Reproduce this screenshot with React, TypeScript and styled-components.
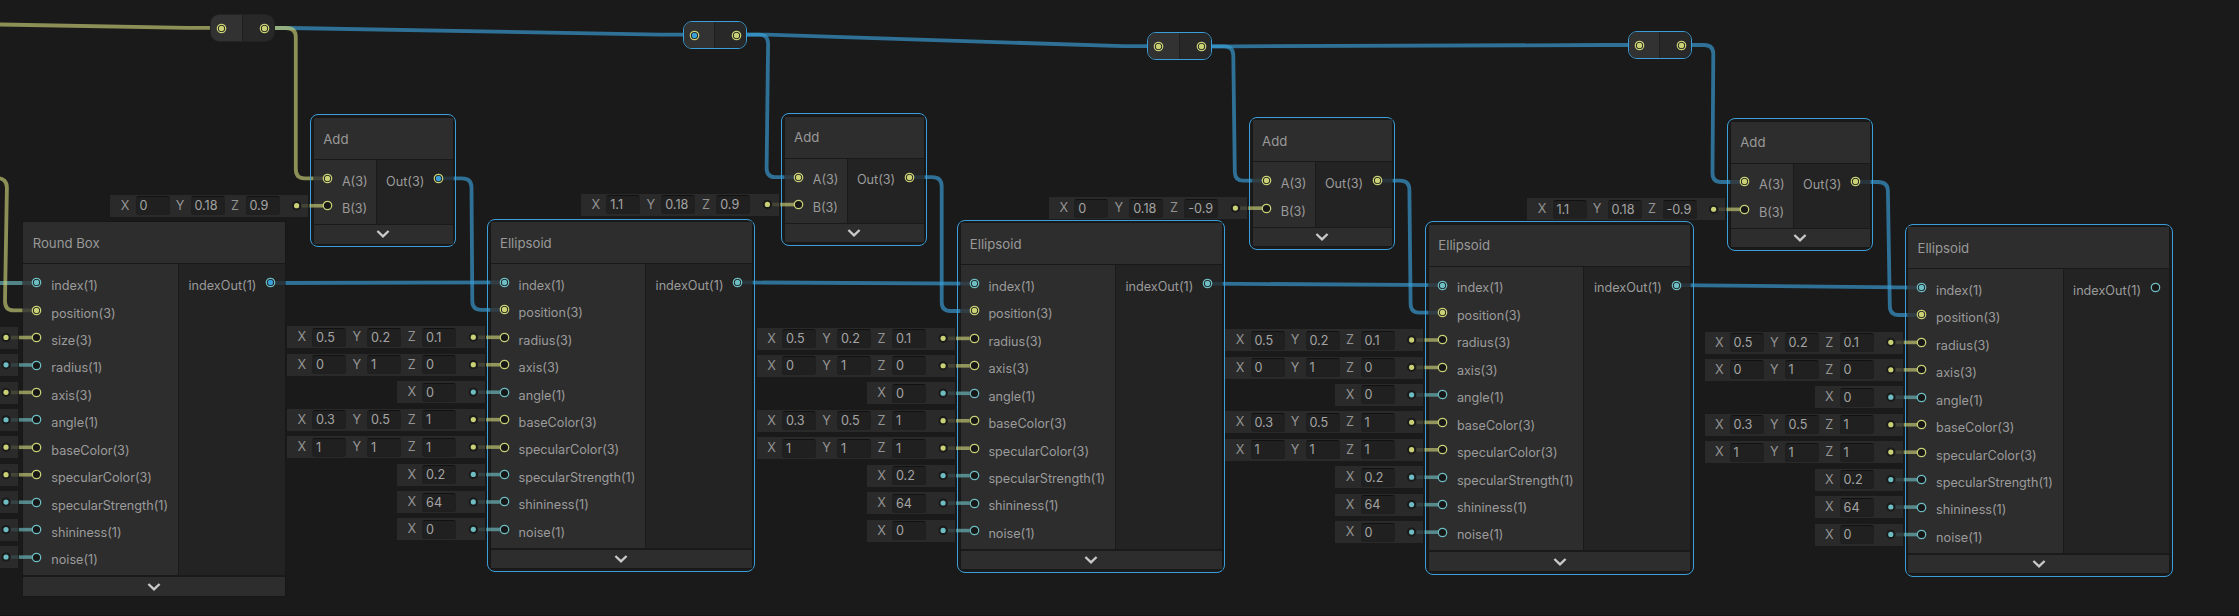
import React from "react";
import styled, { createGlobalStyle } from "styled-components";

const YELLOW = "#c9d076";
const TEAL = "#6dbdc2";
const BLUE = "#3a9fd8";

const ROW = 27.45;

const GlobalStyle = createGlobalStyle`
  body {
    margin: 0;
    background: #1a1a1a;
    overflow: hidden;
  }
`;

const Canvas = styled.main`
  position: relative;
  width: 2239px;
  height: 616px;
  box-sizing: border-box;
  overflow: hidden;
  background: #1a1a1a;
  border-bottom: 1px solid #141414;
  font-family: Inter, sans-serif;
  font-size: 12.65px;
  color: #9b9b9b;
`;

const Wires = styled.svg`
  position: absolute;
  inset: 0;
  pointer-events: none;
`;

const NodeFrame = styled.section<{ $x: number; $y: number; $w: number; $selected: boolean }>`
  position: absolute;
  left: ${(p) => p.$x}px;
  top: ${(p) => p.$y}px;
  width: ${(p) => p.$w}px;
  box-sizing: border-box;
  padding: 2.7px;
  border: 1px solid ${(p) => (p.$selected ? BLUE : "transparent")};
  border-radius: 8px;
`;

const NodeBody = styled.div`
  display: flex;
  flex-direction: column;
  box-shadow: 0 0 0 1px rgba(20, 20, 20, 0.45);
`;

const Header = styled.header`
  height: 41px;
  display: flex;
  align-items: center;
  padding-left: 9.2px;
  background: #2d2d2d;
  border-bottom: 1px solid #191919;
  font-size: 13.2px;
  line-height: 16px;
  color: #999;
`;

const Columns = styled.div`
  display: flex;
  gap: 1px;
`;

const InputColumn = styled.div<{ $w: number }>`
  width: ${(p) => p.$w}px;
  padding: 4.5px 0 4.7px;
  background: rgba(50, 50, 50, 0.8);
`;

const OutputColumn = styled.div`
  flex: 1;
  padding: 4.5px 0 4.7px;
  background: rgba(37, 37, 37, 0.8);
`;

const PortRow = styled.div<{ $out?: boolean }>`
  height: ${ROW}px;
  display: flex;
  align-items: center;
  justify-content: ${(p) => (p.$out ? "flex-end" : "flex-start")};
  gap: 8.8px;
  padding: ${(p) => (p.$out ? "0 8.5px 0 0" : "0 0 0 8px")};
`;

const Label = styled.span`
  padding-top: 6.8px;
  line-height: 16px;
  white-space: nowrap;
`;

const Footer = styled.footer<{ $compact: boolean }>`
  height: ${(p) => (p.$compact ? 18.5 : 18.8)}px;
  margin-top: ${(p) => (p.$compact ? 1 : 1.8)}px;
  display: flex;
  align-items: center;
  justify-content: center;
  background: #2d2d2d;
`;

const PortIcon = styled.svg`
  flex: none;
  width: 11px;
  height: 11px;
`;

const InputStack = styled.div<{ $x: number; $y: number }>`
  position: absolute;
  left: ${(p) => p.$x - 200}px;
  top: ${(p) => p.$y}px;
  width: 198px;
  display: flex;
  flex-direction: column;
  align-items: flex-end;
`;

const InputRow = styled.div`
  height: ${ROW}px;
  display: flex;
  align-items: flex-start;
`;

const InputBox = styled.div`
  height: 22px;
  box-sizing: border-box;
  display: flex;
  align-items: center;
  padding-left: 4.2px;
  background: #2a2a2a;
`;

const Axis = styled.span`
  width: 21px;
  text-align: center;
  line-height: 16px;
  color: #949494;
`;

const Field = styled.span`
  width: 34px;
  height: 19px;
  box-sizing: border-box;
  padding-left: 2.8px;
  border: 1px solid #1f1f1f;
  border-top-color: #111;
  border-radius: 3px;
  background: #202020;
  line-height: 18px;
  color: #a4a4a4;
`;

const Spacer = styled.span`
  width: 28.8px;
`;

const Redirect = styled.div<{ $x: number; $y: number; $selected: boolean }>`
  position: absolute;
  left: ${(p) => p.$x}px;
  top: ${(p) => p.$y}px;
  width: ${(p) => (p.$selected ? 64.4 : 65)}px;
  height: 28px;
  box-sizing: border-box;
  display: flex;
  gap: 1px;
  overflow: hidden;
  border: 1px solid ${(p) => (p.$selected ? BLUE : "#222")};
  border-radius: 9px;
  background: #1f1f1f;
`;

const RedirectHalf = styled.div<{ $out?: boolean }>`
  flex: 1;
  display: flex;
  align-items: center;
  justify-content: ${(p) => (p.$out ? "flex-end" : "flex-start")};
  padding: 0 4px 0 5px;
  background: ${(p) => (p.$out ? "#282828" : "#323232")};
`;

function Port({ color, fill }: { color: string; fill?: string }) {
  return (
    <PortIcon viewBox="0 0 11 11">
      <circle cx="5.5" cy="5.5" r="4.2" fill="#171717" stroke={color} strokeWidth="1.25" />
      {fill && <circle cx="5.5" cy="5.5" r="2.7" fill={fill} />}
    </PortIcon>
  );
}

function Chevron() {
  return (
    <svg width="14" height="10" viewBox="0 0 14 10">
      <path d="M1.4 2 L7 7.4 L12.6 2" fill="none" stroke="#cacaca" strokeWidth="2.3" />
    </svg>
  );
}

type PortDef = { label: string; fill?: string; value?: string[] };

const tone = (label: string) => (label.endsWith("(3)") ? YELLOW : TEAL);

type NodeProps = {
  title: string;
  x: number;
  y: number;
  w: number;
  inputWidth: number;
  inputs: PortDef[];
  output: PortDef;
  selected?: boolean;
  compact?: boolean;
};

function GraphNode({
  title,
  x,
  y,
  w,
  inputWidth,
  inputs,
  output,
  selected = true,
  compact = false,
}: NodeProps) {
  const firstFree = inputs.findIndex((p) => p.value);
  return (
    <>
      <InputStack $x={x} $y={y + 53.0 + firstFree * ROW}>
        {inputs.slice(firstFree).map((p) => (
          <InputRow key={p.label}>
            <InputBox>
              {p.value!.map((v, i) => (
                <React.Fragment key={i}>
                  <Axis>{"XYZ"[i]}</Axis>
                  <Field>{v}</Field>
                </React.Fragment>
              ))}
              <Spacer />
            </InputBox>
          </InputRow>
        ))}
      </InputStack>
      <NodeFrame $x={x} $y={y} $w={w} $selected={selected}>
        <NodeBody>
          <Header>{title}</Header>
          <Columns>
            <InputColumn $w={inputWidth}>
              {inputs.map((p) => (
                <PortRow key={p.label}>
                  <Port color={tone(p.label)} fill={p.fill} />
                  <Label>{p.label}</Label>
                </PortRow>
              ))}
            </InputColumn>
            <OutputColumn>
              <PortRow $out>
                <Label>{output.label}</Label>
                <Port color={tone(output.label)} fill={output.fill} />
              </PortRow>
            </OutputColumn>
          </Columns>
          <Footer $compact={compact}>
            <Chevron />
          </Footer>
        </NodeBody>
      </NodeFrame>
    </>
  );
}

const linked = (label: string): PortDef => ({ label, fill: tone(label) });
const free = (label: string, ...value: string[]): PortDef => ({ label, value });

const ellipsoidInputs = [
  linked("index(1)"),
  linked("position(3)"),
  free("radius(3)", "0.5", "0.2", "0.1"),
  free("axis(3)", "0", "1", "0"),
  free("angle(1)", "0"),
  free("baseColor(3)", "0.3", "0.5", "1"),
  free("specularColor(3)", "1", "1", "1"),
  free("specularStrength(1)", "0.2"),
  free("shininess(1)", "64"),
  free("noise(1)", "0"),
];

/* The value fields of this node lie beyond the left edge of the viewport. */
const roundBoxInputs = [
  linked("index(1)"),
  linked("position(3)"),
  free("size(3)"),
  free("radius(1)"),
  free("axis(3)"),
  free("angle(1)"),
  free("baseColor(3)"),
  free("specularColor(3)"),
  free("specularStrength(1)"),
  free("shininess(1)"),
  free("noise(1)"),
];

const addNodes = [
  { x: 310.4, y: 114.4, b: ["0", "0.18", "0.9"], out: BLUE },
  { x: 781.2, y: 113.2, b: ["1.1", "0.18", "0.9"], out: YELLOW },
  { x: 1249.2, y: 116.8, b: ["0", "0.18", "-0.9"], out: YELLOW },
  { x: 1727.4, y: 118, b: ["1.1", "0.18", "-0.9"], out: YELLOW },
];

const ellipsoids = [
  { x: 487.1, y: 218.5, out: TEAL },
  { x: 956.9, y: 219.6, out: TEAL },
  { x: 1425.4, y: 221.2, out: TEAL },
  { x: 1904.6, y: 223.6, out: undefined },
];

const redirects = [
  { x: 210, y: 14, selected: false, fill: YELLOW },
  { x: 682.6, y: 21, selected: true, fill: BLUE },
  { x: 1147.4, y: 32.3, selected: true, fill: YELLOW },
  { x: 1627.6, y: 31.2, selected: true, fill: YELLOW },
];

/* Long links between nodes, drawn beneath the node bodies. */
const links: [string, string][] = [
  [YELLOW, "M0 24.5 L188 27.8 H210"],
  [BLUE, "M275 28 H291 L660 34.6 H683"],
  [YELLOW, "M275 28 H286 Q295.8 28 295.8 37 V169 Q295.8 178.3 304.5 178.3 H327"],
  [BLUE, "M439 178.3 H462 Q471.5 178.3 471.5 187.5 L472.3 301 Q472.4 309.8 481 309.8 H504"],
  [BLUE, "M747 34.7 H767 L1123 46.2 H1148"],
  [BLUE, "M747 34.7 H759 Q768.2 34.7 768.1 44 L766.6 168 Q766.6 177.2 775 177.2 H798"],
  [BLUE, "M910 177.2 H932 Q941.7 177.2 941.7 186.5 V302 Q941.7 311 950.5 311 H974"],
  [BLUE, "M1212 46.3 H1232 L1604 45 H1628"],
  [BLUE, "M1212 46.3 H1224 Q1233.2 46.3 1233.3 55.5 L1234.8 172 Q1234.9 180.7 1243.5 180.7 H1266"],
  [BLUE, "M1378 180.7 H1400 Q1409.3 180.7 1409.4 190 L1410.6 303.5 Q1410.7 312.6 1419 312.6 H1442"],
  [BLUE, "M1692 45 H1704 Q1713.3 45 1713.3 54 L1712.5 173 Q1712.5 182 1721 182 H1744"],
  [BLUE, "M1856 182 H1878 Q1887.8 182 1887.9 191 L1889.8 306 Q1890 315 1898.5 315 H1922"],
  [BLUE, "M271 283 L504 282.4"],
  [BLUE, "M738 282.4 L974 283.6"],
  [BLUE, "M1208 283.6 L1442 285.2"],
  [BLUE, "M1677 285.2 L1922 287.6"],
  [TEAL, "M0 283 H37"],
  [YELLOW, "M-4 178 Q7 178 6.9 188 L5 301 Q5 310.4 13.5 310.4 H37"],
];

/* Short stub from an inline input's dot to its port. */
function Stub({ x, y, color }: { x: number; y: number; color: string }) {
  return (
    <g>
      <circle cx={x - 13.8} cy={y - 0.6} r="4.6" fill="#1a1a1a" />
      <circle cx={x - 13.8} cy={y - 0.6} r="2.6" fill={color} />
      <path d={`M${x - 9} ${y - 0.5} H${x - 2}`} stroke={color} strokeOpacity="0.17" strokeWidth="3.6" />
      <path d={`M${x - 1} ${y - 0.5} H${x + 12.8}`} stroke={color} strokeOpacity="0.65" strokeWidth="3.6" />
    </g>
  );
}

function stubs(x: number, y: number, inputs: PortDef[]) {
  return inputs.map((p, i) =>
    p.value ? <Stub key={`${x}-${i}`} x={x} y={y + 64.4 + i * ROW} color={tone(p.label)} /> : null,
  );
}

const addInputs = (b: string[]) => [linked("A(3)"), free("B(3)", ...b)];

export default function App() {
  return (
    <>
      <GlobalStyle />
      <Canvas>
        <Wires width="2239" height="616">
          {links.map(([color, d]) => (
            <path key={d} d={d} fill="none" stroke={color} strokeOpacity="0.65" strokeWidth="3.8" />
          ))}
        </Wires>
        {redirects.map((r) => (
          <Redirect key={r.x} $x={r.x} $y={r.y} $selected={r.selected}>
            <RedirectHalf>
              <Port color={YELLOW} fill={r.fill} />
            </RedirectHalf>
            <RedirectHalf $out>
              <Port color={YELLOW} fill={YELLOW} />
            </RedirectHalf>
          </Redirect>
        ))}
        {addNodes.map((n) => (
          <GraphNode
            key={n.x}
            title="Add"
            x={n.x}
            y={n.y}
            w={146}
            inputWidth={62.3}
            inputs={addInputs(n.b)}
            output={{ label: "Out(3)", fill: n.out }}
            compact
          />
        ))}
        <GraphNode
          title="Round Box"
          x={19.8}
          y={218.8}
          w={268.6}
          inputWidth={154.4}
          inputs={roundBoxInputs}
          output={{ label: "indexOut(1)", fill: BLUE }}
          selected={false}
        />
        {ellipsoids.map((n) => (
          <GraphNode
            key={n.x}
            title="Ellipsoid"
            x={n.x}
            y={n.y}
            w={268.4}
            inputWidth={154.4}
            inputs={ellipsoidInputs}
            output={{ label: "indexOut(1)", fill: n.out }}
          />
        ))}
        <Wires width="2239" height="616">
          {addNodes.map((n) => stubs(n.x, n.y, addInputs(n.b)))}
          {stubs(19.8, 218.7, roundBoxInputs)}
          {ellipsoids.map((n) => stubs(n.x, n.y, ellipsoidInputs))}
        </Wires>
      </Canvas>
    </>
  );
}
